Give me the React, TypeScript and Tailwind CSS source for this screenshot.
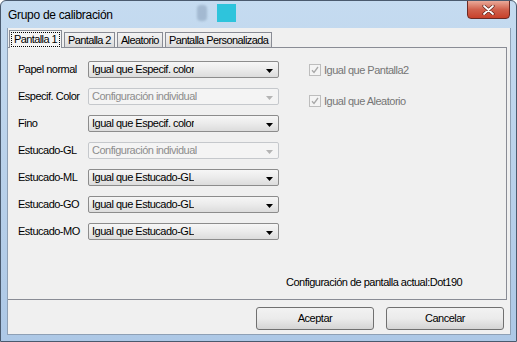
import { ReactNode } from 'react';

const font = { fontFamily: '"Liberation Sans", Arial, sans-serif' };

interface ComboProps {
  value: string;
  disabled?: boolean;
}

function Combo({ value, disabled }: ComboProps) {
  return (
    <div
      className={`flex h-[17px] w-[191px] items-center justify-between rounded-[2px] border pl-[3px] pr-[5px] ${
        disabled
          ? 'border-[#c5c8cc] bg-[#f4f4f4] text-[#8d8d8d]'
          : 'border-[#8c8c8c] bg-gradient-to-b from-[#f6f6f6] via-[#ebebeb] to-[#dcdcdc] text-black'
      }`}
    >
      <span className="truncate">{value}</span>
      <svg width="7" height="4" viewBox="0 0 7 4" className="mt-[2px]">
        <path d="M0 0h7L3.5 4z" fill={disabled ? '#b4b4b4' : '#000'} />
      </svg>
    </div>
  );
}

function Row({ label, value, disabled }: { label: string; value: string; disabled?: boolean }) {
  return (
    <div className="flex items-center">
      <span className="w-[70px] shrink-0">{label}</span>
      <Combo value={value} disabled={disabled} />
    </div>
  );
}

function Check({ children }: { children: ReactNode }) {
  return (
    <div className="flex items-center gap-[3px] text-[#767676]">
      <div className="flex h-[12px] w-[12px] items-center justify-center border border-[#bdbdbd] bg-[#f4f4f4]">
        <svg width="8" height="8" viewBox="0 0 8 8">
          <path d="M1 4.2l2 2.2L7 1" stroke="#a8a8a8" strokeWidth="1.3" fill="none" />
        </svg>
      </div>
      <span>{children}</span>
    </div>
  );
}

function Tab({ label, active }: { label: string; active?: boolean }) {
  if (active) {
    return (
      <div className="relative z-10 -mb-px flex h-[18px] items-center border border-b-0 border-[#898c95] bg-[#f5f5f5] px-[1px]">
        <span className="border border-dotted border-black px-[2px] leading-[13px]">{label}</span>
      </div>
    );
  }
  return (
    <div className="flex h-[15px] items-center border border-b-0 border-[#898c95] bg-gradient-to-b from-[#f3f3f3] via-[#e9e9e9] to-[#d9d9d9] px-[3px]">
      {label}
    </div>
  );
}

function Button({ label }: { label: string }) {
  return (
    <div className="flex h-[23px] w-[118px] items-center justify-center rounded-[3px] border border-[#707070] bg-gradient-to-b from-[#f2f2f2] via-[#ebebeb] to-[#d4d4d4]">
      {label}
    </div>
  );
}

export default function App() {
  return (
    <div
      className="flex h-[342px] w-[517px] flex-col overflow-hidden rounded-t-[6px] border border-[#4a5a6e] bg-gradient-to-b from-[#c5dbf0] via-[#b9d1ea] to-[#adc8e6] text-[11px] tracking-[-0.5px] text-black"
      style={font}
    >
      {/* title bar */}
      <div className="relative flex h-[27px] shrink-0 items-center pl-[7px]">
        <span className="text-[12px] tracking-[-0.3px] text-black">Grupo de calibración</span>
        <div className="absolute left-[196px] top-[4px] h-[16px] w-[10px] rounded-sm bg-[#8ea4bd] opacity-60 blur-[1px]" />
        <div className="absolute left-[216px] top-[3px] h-[18px] w-[19px] bg-[#2ec4dc] blur-[0.5px]" />
        <div className="absolute right-[6px] top-[-1px] flex h-[19px] w-[43px] items-center justify-center rounded-b-[4px] border border-[#6b2a24] bg-gradient-to-b from-[#e9a999] via-[#d0614d] to-[#c8402a]">
          <svg width="13" height="10" viewBox="0 0 13 10">
            <path d="M2 1l9 8M11 1l-9 8" stroke="#5a2018" strokeWidth="3.2" strokeLinecap="round" />
            <path d="M2 1l9 8M11 1l-9 8" stroke="#fff" strokeWidth="1.8" strokeLinecap="round" />
          </svg>
        </div>
      </div>

      {/* client */}
      <div className="ml-[6px] flex h-[307px] w-[504px] flex-col border border-t-0 border-[#8ea0b5] bg-[#f0f0f0]">
        <div className="flex items-end gap-[2px] pl-[1px] pt-[2px] tracking-[-0.6px]">
          <Tab label="Pantalla 1" active />
          <Tab label="Pantalla 2" />
          <Tab label="Aleatorio" />
          <Tab label="Pantalla Personalizada" />
        </div>

        <div className="mr-[3px] flex h-[253px] flex-col border border-l-0 border-[#898c95] bg-[#f0f0f0] pl-[10px] pt-[13px]">
          <div className="flex">
            <div className="flex flex-col gap-[10px]">
              <Row label="Papel normal" value="Igual que Especif. color" />
              <Row label="Especif. Color" value="Configuración individual" disabled />
              <Row label="Fino" value="Igual que Especif. color" />
              <Row label="Estucado-GL" value="Configuración individual" disabled />
              <Row label="Estucado-ML" value="Igual que Estucado-GL" />
              <Row label="Estucado-GO" value="Igual que Estucado-GL" />
              <Row label="Estucado-MO" value="Igual que Estucado-GL" />
            </div>
            <div className="ml-[30px] flex flex-col gap-[14px] pt-[1px]">
              <Check>Igual que Pantalla2</Check>
              <Check>Igual que Aleatorio</Check>
            </div>
          </div>
          <div className="mt-auto pb-[9px] pl-[268px]">Configuración de pantalla actual:Dot190</div>
        </div>

        <div className="flex justify-end gap-[12px] pr-[6px] pt-[7px]">
          <Button label="Aceptar" />
          <Button label="Cancelar" />
        </div>
      </div>
    </div>
  );
}
